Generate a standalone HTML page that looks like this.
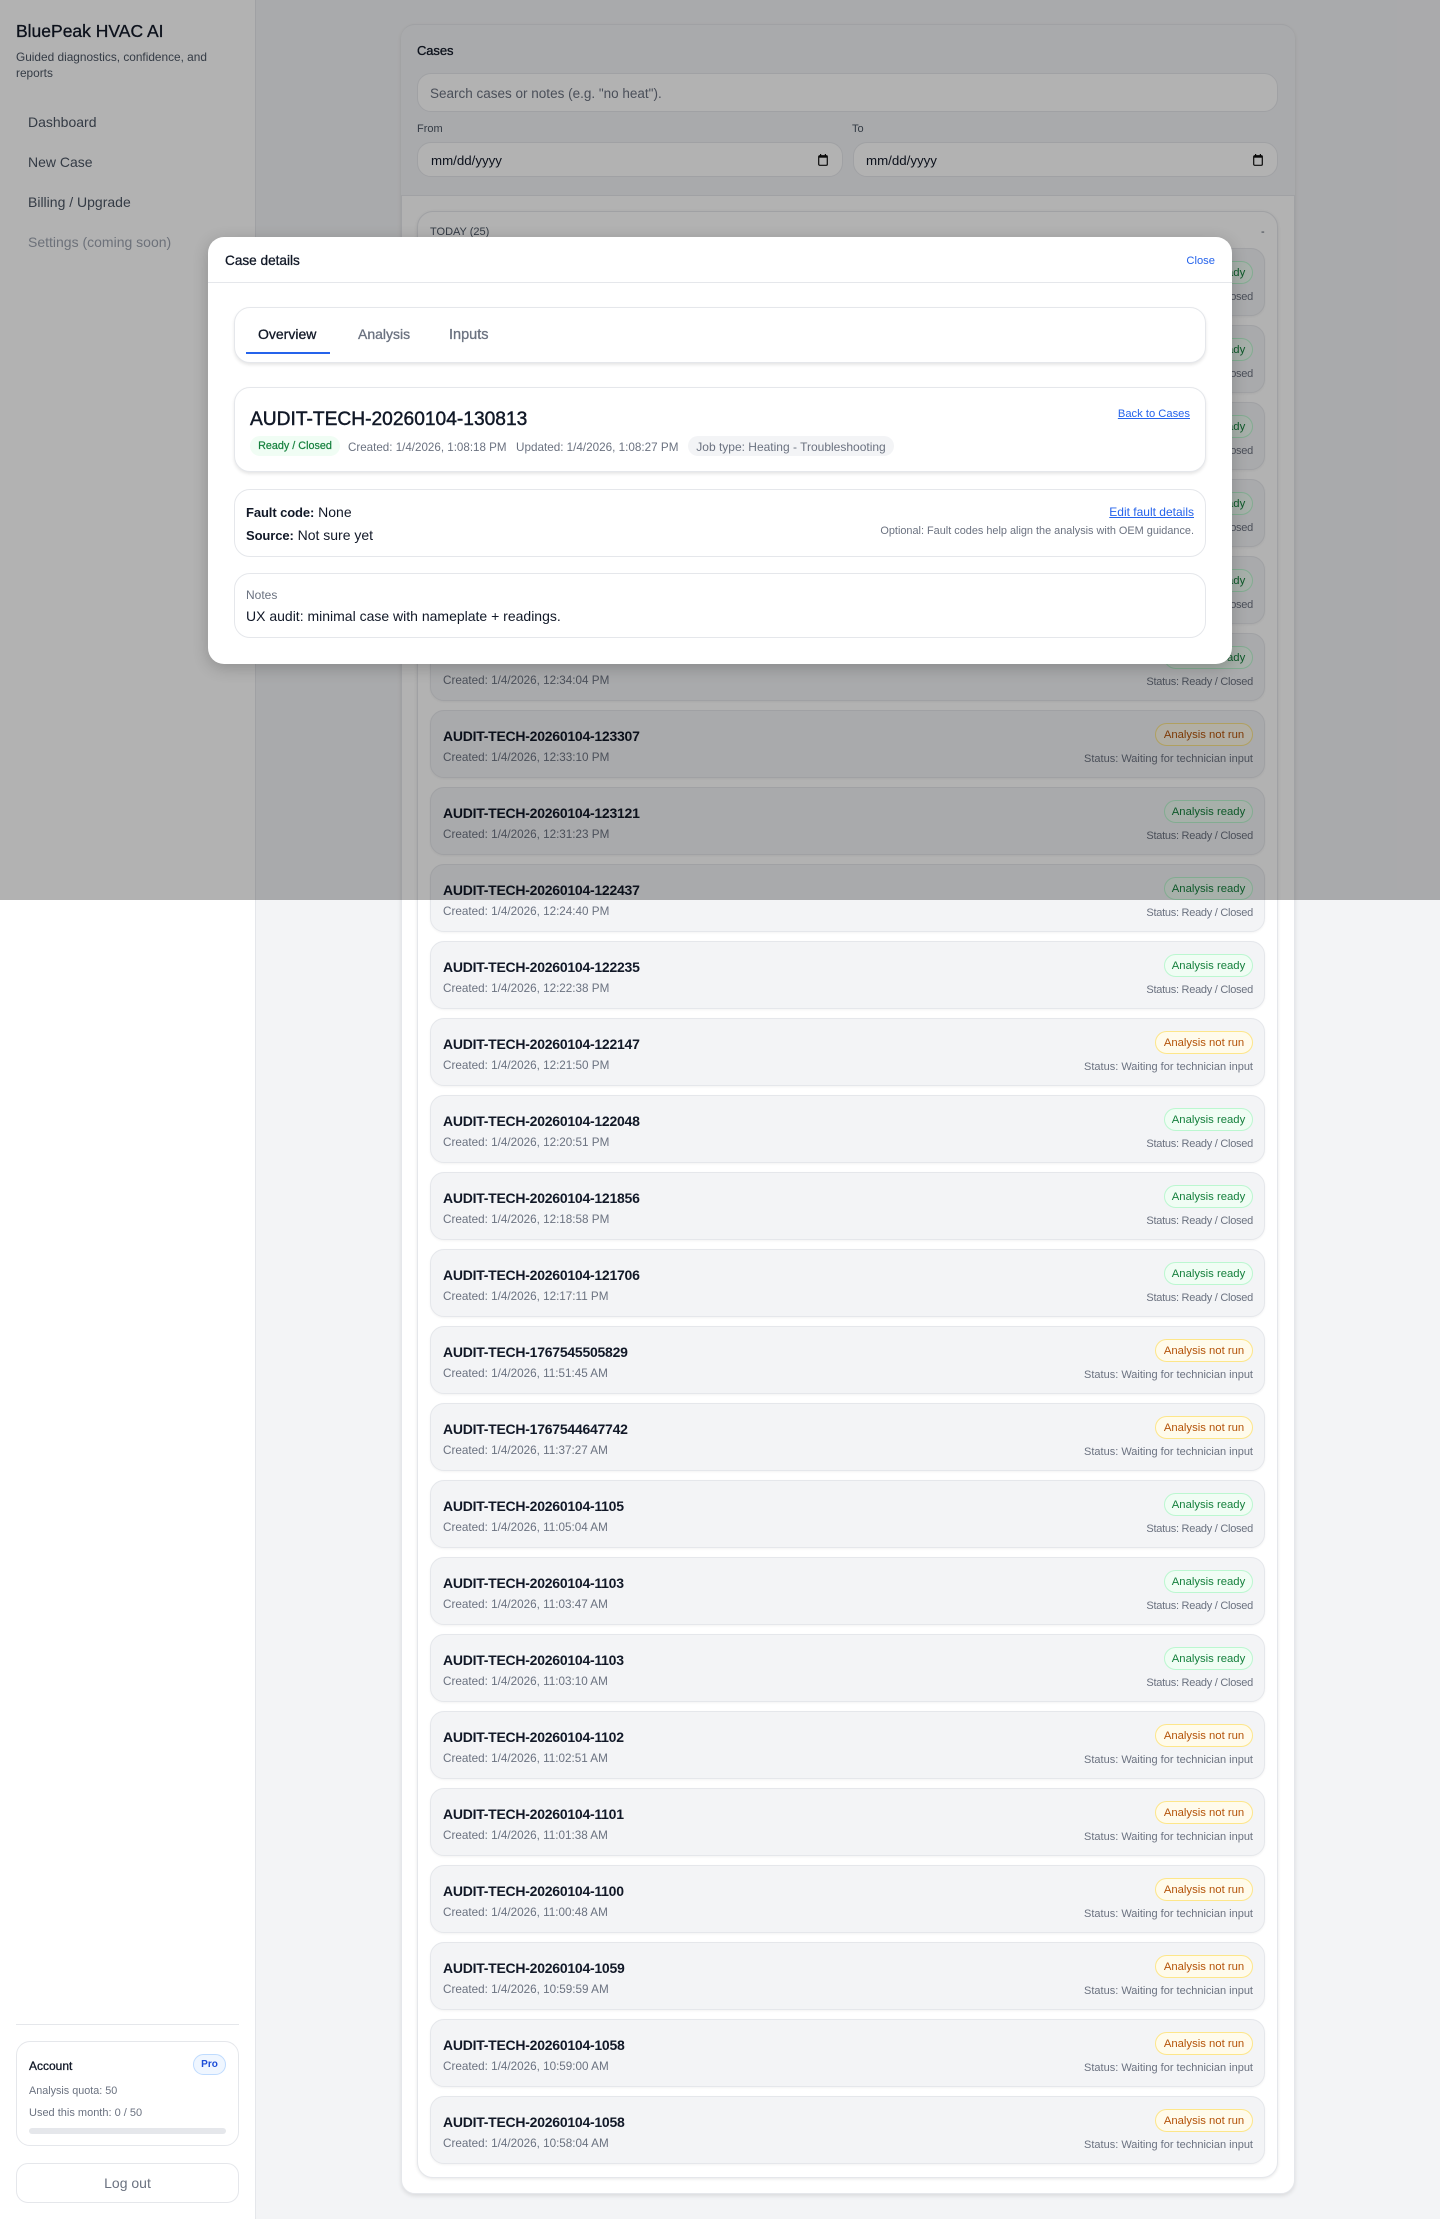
<!DOCTYPE html>
<html lang="en">
<head>
<meta charset="utf-8">
<title>Case details</title>
<style>
*{box-sizing:border-box}
html,body{margin:0;padding:0}
body{width:1440px;height:2219px;position:relative;overflow:hidden;background:#f3f4f6;font-family:"Liberation Sans",Arial,sans-serif;color:#111827}
.a{position:absolute;white-space:nowrap;line-height:20px}
.m{-webkit-text-stroke:.3px currentColor}
#side{position:absolute;left:0;top:0;width:256px;height:2219px;background:#fff;border-right:1px solid #e5e7eb}
.nav{left:28px;font-size:14px;color:#4b5563}
#card{position:absolute;left:401px;top:24px;width:894px;height:2170px;background:#fff;border:1px solid #e5e7eb;border-radius:14px;box-shadow:0 2px 4px rgba(0,0,0,.1)}
#cardhead{position:absolute;left:401px;top:24px;width:894px;height:172px;background:#f3f4f6;border-bottom:1px solid #e5e7eb;border-top:1px solid #e5e7eb;border-radius:14px 14px 0 0}
.input{position:absolute;background:#fff;border:1px solid #e5e7eb;border-radius:14px}
#group{position:absolute;left:417px;top:211px;width:861px;height:1967px;background:#fff;border:1px solid #e5e7eb;border-radius:16px;box-shadow:0 1px 3px rgba(0,0,0,.1)}
#rows{position:absolute;left:430px;top:248px;width:835px}
.r{position:relative;height:68px;margin-bottom:9px;background:#f3f4f6;border:1px solid #e5e7eb;border-radius:14px;box-shadow:0 1px 2px rgba(0,0,0,.05)}
.r b{position:absolute;left:12px;top:15px;font-size:14px;line-height:20px;letter-spacing:-.25px;white-space:nowrap;color:#111827}
.r i{position:absolute;left:12px;top:37px;font-style:normal;font-size:11.7px;line-height:20px;color:#6b7280;white-space:nowrap}
.r u{position:absolute;right:11px;top:38px;text-decoration:none;font-size:11px;line-height:20px;color:#6b7280;white-space:nowrap}
.r s.g + u{letter-spacing:-.27px}
.r s{position:absolute;right:11px;top:12px;height:23px;border-radius:12px;text-decoration:none;text-align:center;font-size:11.3px;line-height:22px;white-space:nowrap;border:1px solid}
.g{width:89px;background:#f0fdf4;border-color:#bbf7d0!important;color:#15803d}
.n{width:98px;background:#fffbeb;border-color:#fde68a!important;color:#b45309}
#ov{position:absolute;left:0;top:0;width:1440px;height:900px;background:rgba(0,0,0,.3)}
#modal{position:absolute;left:208px;top:237px;width:1024px;height:427px;background:#fff;border-radius:16px;box-shadow:0 4px 16px rgba(0,0,0,.2)}
.box{position:absolute;left:26px;width:972px;background:#fff;border:1px solid #e5e7eb;border-radius:16px}
.sh{box-shadow:0 2px 3px rgba(0,0,0,.1)}
a{color:#2563eb}
.b{color:#2563eb}
.gray{color:#6b7280}
</style>
</head>
<body>
<div id="side">
  <div class="a m" style="left:16px;top:21px;font-size:17.5px">BluePeak HVAC AI</div>
  <div class="a gray" style="left:16px;top:47px;font-size:11.85px;color:#4b5563">Guided diagnostics, confidence, and</div>
  <div class="a gray" style="left:16px;top:63px;font-size:11.85px;color:#4b5563">reports</div>
  <div class="a nav" style="top:112px">Dashboard</div>
  <div class="a nav" style="top:152px">New Case</div>
  <div class="a nav" style="top:192px">Billing / Upgrade</div>
  <div class="a nav" style="top:232px;color:#9ca3af">Settings (coming soon)</div>
  <div style="position:absolute;left:16px;top:2024px;width:223px;height:1px;background:#e5e7eb"></div>
  <div style="position:absolute;left:16px;top:2041px;width:223px;height:105px;border:1px solid #e5e7eb;border-radius:14px;background:#fff"></div>
  <div class="a m" style="left:29px;top:2056px;font-size:12px">Account</div>
  <div style="position:absolute;left:193px;top:2054px;width:33px;height:21px;border:1px solid #bfdbfe;border-radius:11px;background:#eff6ff;color:#1d4ed8;font-size:10px;font-weight:bold;line-height:19px;text-align:center">Pro</div>
  <div class="a" style="left:29px;top:2081px;font-size:10.8px;color:#6b7280">Analysis quota: 50</div>
  <div class="a" style="left:29px;top:2103px;font-size:11px;color:#6b7280">Used this month: 0 / 50</div>
  <div style="position:absolute;left:29px;top:2128px;width:197px;height:6px;border-radius:3px;background:#e5e7eb"></div>
  <div style="position:absolute;left:16px;top:2163px;width:223px;height:40px;border:1px solid #e5e7eb;border-radius:12px;background:#fff;color:#6b7280;font-size:14px;line-height:38px;text-align:center">Log out</div>
</div>

<div id="card"></div>
<div id="cardhead"></div>
<div class="a m" style="left:417px;top:41px;font-size:13px;letter-spacing:-.1px">Cases</div>
<div class="input" style="left:417px;top:73px;width:861px;height:39px"></div>
<div class="a gray" style="left:430px;top:84px;font-size:13.5px">Search cases or notes (e.g. "no heat").</div>
<div class="a" style="left:417px;top:119px;font-size:11px;color:#4b5563">From</div>
<div class="a" style="left:852px;top:119px;font-size:11px;color:#4b5563">To</div>
<div class="input" style="left:417px;top:142px;width:426px;height:35px"></div>
<div class="input" style="left:853px;top:142px;width:425px;height:35px"></div>
<div class="a" style="left:431px;top:151px;font-size:13.3px">mm/dd/yyyy</div>
<div class="a" style="left:866px;top:151px;font-size:13.3px">mm/dd/yyyy</div>
<svg style="position:absolute;left:818px;top:154px" width="10" height="12" viewBox="0 0 10 12"><rect x=".7" y="1.7" width="8.6" height="9.6" rx="1" fill="none" stroke="#111" stroke-width="1.2"/><rect x=".7" y="1.5" width="8.6" height="2.2" fill="#111"/><rect x="2" y="0" width="1.2" height="2" fill="#111"/><rect x="6.8" y="0" width="1.2" height="2" fill="#111"/></svg>
<svg style="position:absolute;left:1253px;top:154px" width="10" height="12" viewBox="0 0 10 12"><rect x=".7" y="1.7" width="8.6" height="9.6" rx="1" fill="none" stroke="#111" stroke-width="1.2"/><rect x=".7" y="1.5" width="8.6" height="2.2" fill="#111"/><rect x="2" y="0" width="1.2" height="2" fill="#111"/><rect x="6.8" y="0" width="1.2" height="2" fill="#111"/></svg>

<div id="group"></div>
<div class="a" style="left:430px;top:222px;font-size:11px;color:#4b5563">TODAY (25)</div>
<div class="a" style="left:1261px;top:222px;font-size:11px;color:#4b5563">-</div>

<div id="rows">
<div class="r"><b>AUDIT-TECH-20260104-130813</b><i>Created: 1/4/2026, 1:08:18 PM</i><s class="g">Analysis ready</s><u>Status: Ready / Closed</u></div>
<div class="r"><b>AUDIT-TECH-20260104-125611</b><i>Created: 1/4/2026, 12:56:11 PM</i><s class="g">Analysis ready</s><u>Status: Ready / Closed</u></div>
<div class="r"><b>AUDIT-TECH-20260104-125102</b><i>Created: 1/4/2026, 12:51:02 PM</i><s class="g">Analysis ready</s><u>Status: Ready / Closed</u></div>
<div class="r"><b>AUDIT-TECH-20260104-124530</b><i>Created: 1/4/2026, 12:45:30 PM</i><s class="g">Analysis ready</s><u>Status: Ready / Closed</u></div>
<div class="r"><b>AUDIT-TECH-20260104-124012</b><i>Created: 1/4/2026, 12:40:12 PM</i><s class="g">Analysis ready</s><u>Status: Ready / Closed</u></div>
<div class="r"><b>AUDIT-TECH-20260104-123401</b><i>Created: 1/4/2026, 12:34:04 PM</i><s class="g">Analysis ready</s><u>Status: Ready / Closed</u></div>
<div class="r"><b>AUDIT-TECH-20260104-123307</b><i>Created: 1/4/2026, 12:33:10 PM</i><s class="n">Analysis not run</s><u>Status: Waiting for technician input</u></div>
<div class="r"><b>AUDIT-TECH-20260104-123121</b><i>Created: 1/4/2026, 12:31:23 PM</i><s class="g">Analysis ready</s><u>Status: Ready / Closed</u></div>
<div class="r"><b>AUDIT-TECH-20260104-122437</b><i>Created: 1/4/2026, 12:24:40 PM</i><s class="g">Analysis ready</s><u>Status: Ready / Closed</u></div>
<div class="r"><b>AUDIT-TECH-20260104-122235</b><i>Created: 1/4/2026, 12:22:38 PM</i><s class="g">Analysis ready</s><u>Status: Ready / Closed</u></div>
<div class="r"><b>AUDIT-TECH-20260104-122147</b><i>Created: 1/4/2026, 12:21:50 PM</i><s class="n">Analysis not run</s><u>Status: Waiting for technician input</u></div>
<div class="r"><b>AUDIT-TECH-20260104-122048</b><i>Created: 1/4/2026, 12:20:51 PM</i><s class="g">Analysis ready</s><u>Status: Ready / Closed</u></div>
<div class="r"><b>AUDIT-TECH-20260104-121856</b><i>Created: 1/4/2026, 12:18:58 PM</i><s class="g">Analysis ready</s><u>Status: Ready / Closed</u></div>
<div class="r"><b>AUDIT-TECH-20260104-121706</b><i>Created: 1/4/2026, 12:17:11 PM</i><s class="g">Analysis ready</s><u>Status: Ready / Closed</u></div>
<div class="r"><b>AUDIT-TECH-1767545505829</b><i>Created: 1/4/2026, 11:51:45 AM</i><s class="n">Analysis not run</s><u>Status: Waiting for technician input</u></div>
<div class="r"><b>AUDIT-TECH-1767544647742</b><i>Created: 1/4/2026, 11:37:27 AM</i><s class="n">Analysis not run</s><u>Status: Waiting for technician input</u></div>
<div class="r"><b>AUDIT-TECH-20260104-1105</b><i>Created: 1/4/2026, 11:05:04 AM</i><s class="g">Analysis ready</s><u>Status: Ready / Closed</u></div>
<div class="r"><b>AUDIT-TECH-20260104-1103</b><i>Created: 1/4/2026, 11:03:47 AM</i><s class="g">Analysis ready</s><u>Status: Ready / Closed</u></div>
<div class="r"><b>AUDIT-TECH-20260104-1103</b><i>Created: 1/4/2026, 11:03:10 AM</i><s class="g">Analysis ready</s><u>Status: Ready / Closed</u></div>
<div class="r"><b>AUDIT-TECH-20260104-1102</b><i>Created: 1/4/2026, 11:02:51 AM</i><s class="n">Analysis not run</s><u>Status: Waiting for technician input</u></div>
<div class="r"><b>AUDIT-TECH-20260104-1101</b><i>Created: 1/4/2026, 11:01:38 AM</i><s class="n">Analysis not run</s><u>Status: Waiting for technician input</u></div>
<div class="r"><b>AUDIT-TECH-20260104-1100</b><i>Created: 1/4/2026, 11:00:48 AM</i><s class="n">Analysis not run</s><u>Status: Waiting for technician input</u></div>
<div class="r"><b>AUDIT-TECH-20260104-1059</b><i>Created: 1/4/2026, 10:59:59 AM</i><s class="n">Analysis not run</s><u>Status: Waiting for technician input</u></div>
<div class="r"><b>AUDIT-TECH-20260104-1058</b><i>Created: 1/4/2026, 10:59:00 AM</i><s class="n">Analysis not run</s><u>Status: Waiting for technician input</u></div>
<div class="r"><b>AUDIT-TECH-20260104-1058</b><i>Created: 1/4/2026, 10:58:04 AM</i><s class="n">Analysis not run</s><u>Status: Waiting for technician input</u></div>
</div>

<div id="ov"></div>

<div id="modal">
  <div class="a m" style="left:17px;top:14px;font-size:13.6px">Case details</div>
  <div class="a b" style="right:17px;top:14px;font-size:11.2px">Close</div>
  <div style="position:absolute;left:0;top:45px;width:1024px;height:1px;background:#e5e7eb"></div>

  <div class="box sh" style="top:70px;height:56px"></div>
  <div class="a m" style="left:50px;top:87px;font-size:14px">Overview</div>
  <div class="a gray m" style="left:150px;top:87px;font-size:14px">Analysis</div>
  <div class="a gray m" style="left:241px;top:88px;font-size:14.5px">Inputs</div>
  <div style="position:absolute;left:38px;top:115px;width:84px;height:2px;background:#2563eb"></div>

  <div class="box sh" style="top:150px;height:85px"></div>
  <div class="a m" style="left:42px;top:173px;font-size:19.2px;line-height:20px;-webkit-text-stroke:.45px currentColor">AUDIT-TECH-20260104-130813</div>
  <div style="position:absolute;left:42px;top:199px;width:90px;height:20px;border-radius:10px;background:#f0fdf4;color:#15803d;font-size:10.8px;line-height:20px;text-align:center;-webkit-text-stroke:.2px currentColor;white-space:nowrap">Ready / Closed</div>
  <div class="a gray" style="left:140px;top:201px;font-size:11.6px">Created: 1/4/2026, 1:08:18 PM</div>
  <div class="a gray" style="left:308px;top:201px;font-size:11.7px">Updated: 1/4/2026, 1:08:27 PM</div>
  <div style="position:absolute;left:480px;top:199px;width:206px;height:20px;border-radius:10px;background:#f3f4f6;color:#6b7280;font-size:12px;line-height:22px;text-align:center;white-space:nowrap">Job type: Heating - Troubleshooting</div>
  <div class="a b" style="right:42px;top:167px;font-size:11.2px;text-decoration:underline">Back to Cases</div>

  <div class="box" style="top:252px;height:68px"></div>
  <div class="a" style="left:38px;top:265px;font-size:14px"><b style="font-size:13px;letter-spacing:-.1px">Fault code:</b> None</div>
  <div class="a" style="left:38px;top:288px;font-size:14px"><b style="font-size:13px;letter-spacing:-.1px">Source:</b> Not sure yet</div>
  <div class="a b" style="right:38px;top:265px;font-size:12px;text-decoration:underline">Edit fault details</div>
  <div class="a gray" style="right:38px;top:284px;font-size:10.9px">Optional: Fault codes help align the analysis with OEM guidance.</div>

  <div class="box" style="top:336px;height:65px"></div>
  <div class="a gray" style="left:38px;top:348px;font-size:12px">Notes</div>
  <div class="a" style="left:38px;top:369px;font-size:14px">UX audit: minimal case with nameplate + readings.</div>
</div>
</body>
</html>
